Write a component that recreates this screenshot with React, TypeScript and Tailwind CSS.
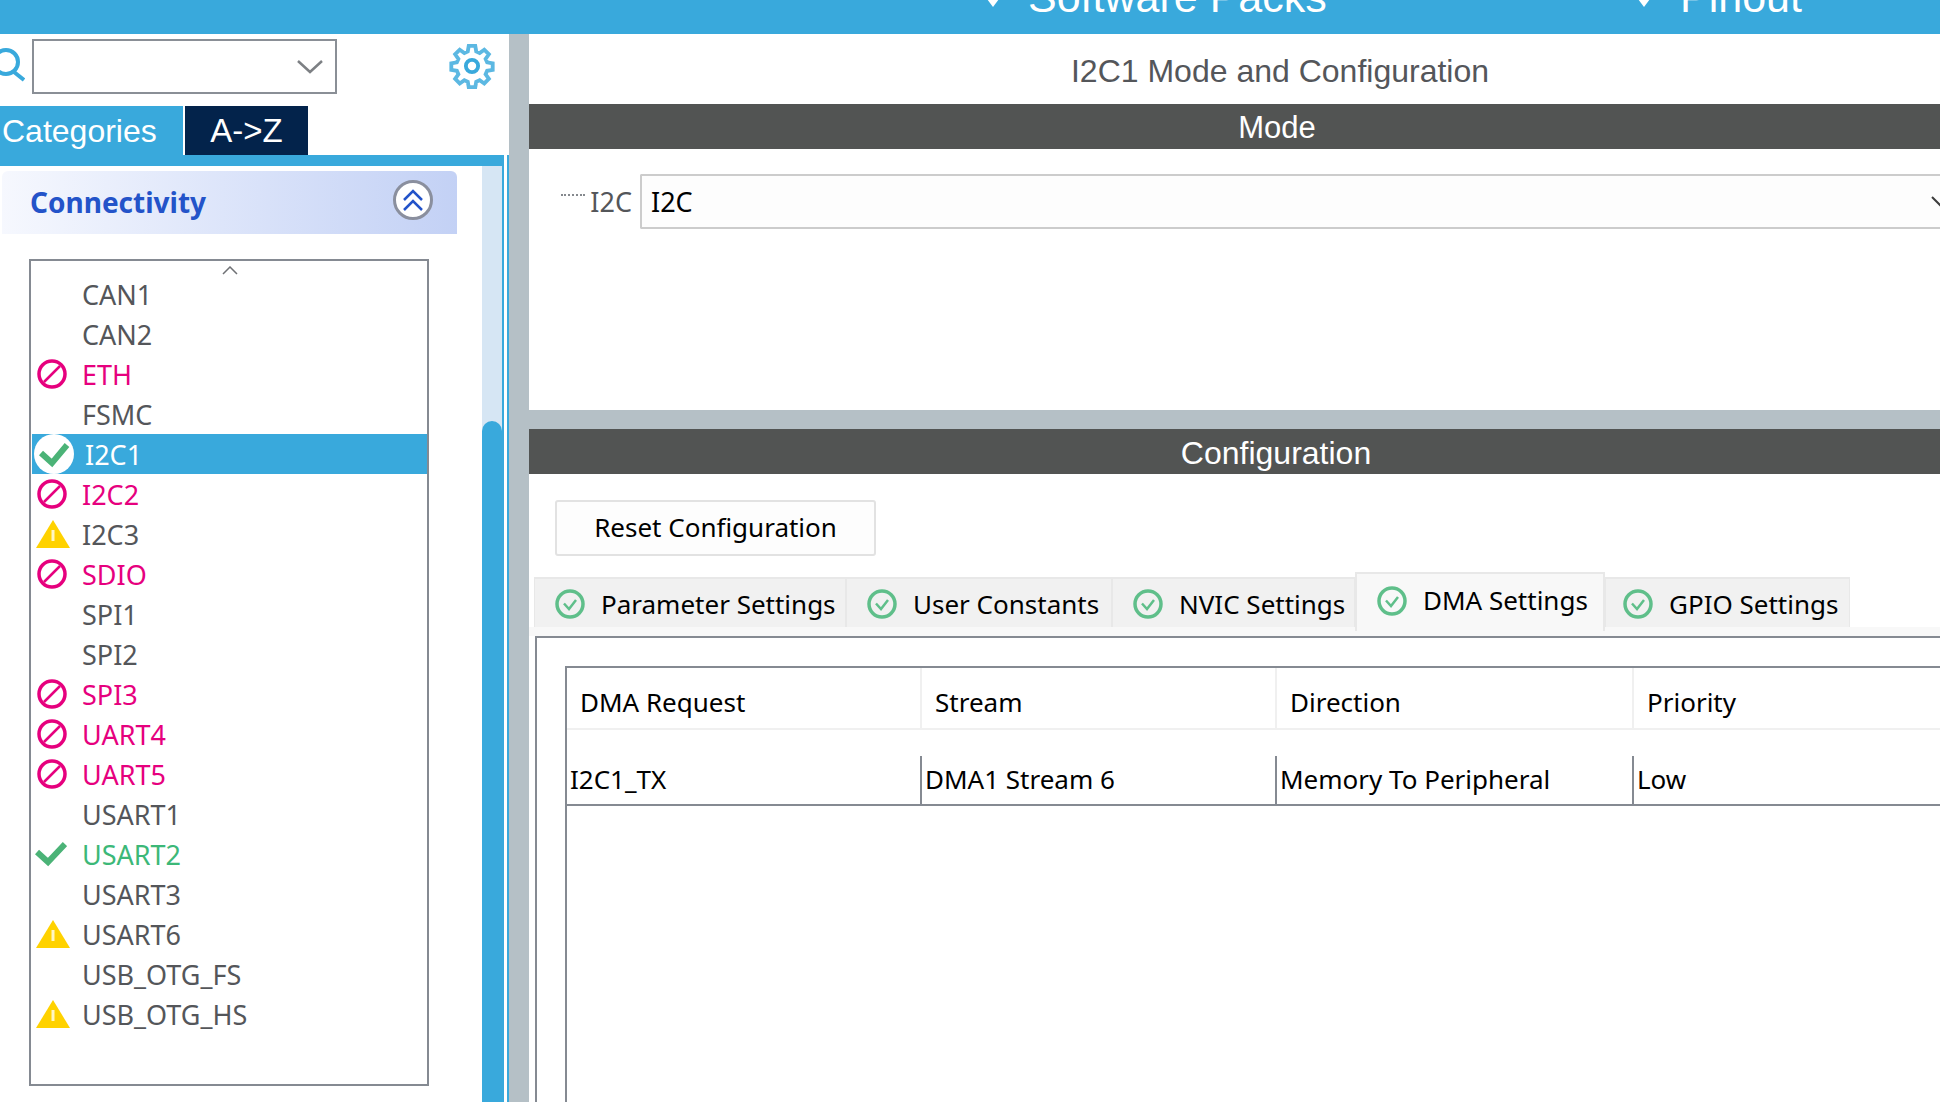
const uiFont = "font-['Noto_Sans','DejaVu_Sans',sans-serif]";
const headFont = "font-['Liberation_Sans',Arial,sans-serif]";

type Status = 'none' | 'blocked' | 'warn' | 'ok' | 'selected';

const peripherals: { name: string; status: Status }[] = [
  { name: 'CAN1', status: 'none' },
  { name: 'CAN2', status: 'none' },
  { name: 'ETH', status: 'blocked' },
  { name: 'FSMC', status: 'none' },
  { name: 'I2C1', status: 'selected' },
  { name: 'I2C2', status: 'blocked' },
  { name: 'I2C3', status: 'warn' },
  { name: 'SDIO', status: 'blocked' },
  { name: 'SPI1', status: 'none' },
  { name: 'SPI2', status: 'none' },
  { name: 'SPI3', status: 'blocked' },
  { name: 'UART4', status: 'blocked' },
  { name: 'UART5', status: 'blocked' },
  { name: 'USART1', status: 'none' },
  { name: 'USART2', status: 'ok' },
  { name: 'USART3', status: 'none' },
  { name: 'USART6', status: 'warn' },
  { name: 'USB_OTG_FS', status: 'none' },
  { name: 'USB_OTG_HS', status: 'warn' },
];

const tabs = [
  { label: 'Parameter Settings', width: 'w-[312px]', pad: 'pl-[20px]' },
  { label: 'User Constants', width: 'w-[266px]', pad: 'pl-[20px]' },
  { label: 'NVIC Settings', width: 'w-[243px]', pad: 'pl-[20px]' },
  { label: 'DMA Settings', width: 'w-[250px]', pad: 'pl-[20px]', active: true },
  { label: 'GPIO Settings', width: 'w-[245px]', pad: 'pl-[17px]' },
];

const Blocked = () => (
  <svg width="30" height="30" viewBox="0 0 30 30" fill="none" stroke="#e6007e">
    <circle cx="15" cy="15" r="13" strokeWidth="3.5" />
    <path d="M7 23 23 7" strokeWidth="2.5" />
  </svg>
);

const Warn = () => (
  <svg width="34" height="28" viewBox="0 0 34 28">
    <path d="M17 0 34 28H0Z" fill="#ffd200" />
    <path d="M17 10v11" stroke="#fff6c4" strokeWidth="3" />
  </svg>
);

const Tick = () => (
  <svg width="32" height="26" viewBox="0 0 32 26" fill="none" stroke="#4bb377" strokeWidth="6">
    <path d="M2 11 13 21 30 3" />
  </svg>
);

const SelectedTick = () => (
  <svg width="40" height="40" viewBox="0 0 40 40">
    <circle cx="20" cy="20" r="20" fill="#fff" />
    <path d="M7 19 18 29 33 11" fill="none" stroke="#4bb377" strokeWidth="6" />
  </svg>
);

const TabCheck = () => (
  <svg width="30" height="30" viewBox="0 0 30 30" fill="none" stroke="#5fbf8a" className="shrink-0">
    <circle cx="15" cy="15" r="13" strokeWidth="3.5" />
    <path d="M9 14.5 14 20 21 11" strokeWidth="2.5" />
  </svg>
);

const Gear = () => (
  <svg width="46" height="46" viewBox="0 0 24 24" fill="none">
    <circle cx="12" cy="12" r="3.2" stroke="#39a9dc" strokeWidth="2" />
    <path
      d="M10.3 1.5h3.4l.5 2.9 1.8.8 2.4-1.7 2.4 2.4-1.7 2.4.8 1.8 2.9.5v3.4l-2.9.5-.8 1.8 1.7 2.4-2.4 2.4-2.4-1.7-1.8.8-.5 2.9h-3.4l-.5-2.9-1.8-.8-2.4 1.7-2.4-2.4 1.7-2.4-.8-1.8-2.9-.5v-3.4l2.9-.5.8-1.8-1.7-2.4 2.4-2.4 2.4 1.7 1.8-.8z"
      stroke="#5cb8e2"
      strokeWidth="2"
    />
  </svg>
);

const Diamond = () => (
  <svg width="18" height="12" viewBox="0 0 18 12" fill="#fff">
    <path d="M0 0h18L9 12Z" />
  </svg>
);

function PeripheralRow({ name, status }: { name: string; status: Status }) {
  const selected = status === 'selected';
  const color =
    status === 'blocked' ? 'text-[#e6007e]' : status === 'ok' ? 'text-[#3cb878]' : selected ? 'text-white' : 'text-[#54565a]';
  const pad = selected ? 'pl-[2px]' : status === 'blocked' ? 'pl-[5px]' : status === 'warn' ? 'pl-[4px]' : 'pl-[3px]';
  return (
    <div className={`flex items-center h-10 ${selected ? 'bg-[#39a9dc]' : ''}`}>
      <div className={`w-[50px] shrink-0 flex items-center ${pad}`}>
        {status === 'blocked' && <Blocked />}
        {status === 'warn' && <Warn />}
        {status === 'ok' && <Tick />}
        {selected && <SelectedTick />}
      </div>
      <span className={`${selected ? 'ml-[3px]' : ''} text-[27px] leading-none ${color}`}>{name}</span>
    </div>
  );
}

function Sidebar() {
  return (
    <div className={`w-[509px] shrink-0 flex flex-col bg-white overflow-hidden ${uiFont}`}>
      {/* search row */}
      <div className="h-[72px] shrink-0 flex items-start pt-[5px]">
        <svg width="26" height="36" viewBox="0 0 26 36" fill="none" stroke="#39a9dc" strokeWidth="4" className="mt-[8px] -ml-[1px]">
          <circle cx="7" cy="15" r="12" />
          <path d="M15 25 25 33" />
        </svg>
        <div className="ml-[7px] w-[305px] h-[55px] border-2 border-[#8a8f96] flex items-center justify-end pr-[12px]">
          <svg width="26" height="16" viewBox="0 0 26 16" fill="none" stroke="#7d8084" strokeWidth="2.5">
            <path d="M1 2 13 13 25 2" />
          </svg>
        </div>
        <div className="ml-[112px] mt-[4px]">
          <Gear />
        </div>
      </div>

      <div className={`h-[49px] shrink-0 flex items-stretch text-white ${headFont}`}>
        <div className="w-[183px] bg-[#39a9dc] pl-[2px] flex items-center text-[32px]">Categories</div>
        <div className="ml-[2px] w-[123px] bg-[#03234b] flex items-center justify-center text-[33px]">A-&gt;Z</div>
      </div>

      <div className="flex-1 min-h-0 flex border-r-2 border-[#39a9dc]">
        <div className="flex-1 min-w-0 flex flex-col border-r-2 border-[#39a9dc] mr-[3px]">
          <div className="h-[11px] shrink-0 bg-[#39a9dc]" />
          <div className="flex-1 min-h-0 flex">
            <div className="w-[482px] shrink-0 pt-[5px]">
              <div className="ml-[2px] w-[455px] h-[63px] rounded-t-[6px] bg-gradient-to-r from-[#f6f8fe] to-[#c3d1f5] flex items-center justify-between pl-[28px] pr-[24px]">
                <span className="-mt-[2px] text-[28px] font-bold text-[#2353c9]">Connectivity</span>
                <div className="-mt-[5px] w-10 h-10 rounded-full border-[3px] border-[#8a8f9e] bg-white flex items-center justify-center">
                  <svg width="22" height="24" viewBox="0 0 22 24" fill="none" stroke="#2353c9" strokeWidth="2.5">
                    <path d="M2 12 11 3l9 9M2 22l9-9 9 9" />
                  </svg>
                </div>
              </div>
              <div className="relative mt-[25px] ml-[29px] w-[400px] h-[827px] border-2 border-[#858a92] pt-[13px] pl-[1px]">
                <svg width="16" height="9" viewBox="0 0 16 9" fill="none" stroke="#6f7175" strokeWidth="1.5" className="absolute top-[5px] left-[191px]">
                  <path d="M1 8 8 1l7 7" />
                </svg>
                {peripherals.map((p) => (
                  <PeripheralRow key={p.name} name={p.name} status={p.status} />
                ))}
              </div>
            </div>
            <div className="w-5 shrink-0 bg-[#d6e6f4] flex flex-col justify-end">
              <div className="h-[681px] rounded-t-[10px] bg-[#39a9dc]" />
            </div>
          </div>
        </div>
      </div>
    </div>
  );
}

function ConfigTable() {
  const heads = [
    { label: 'DMA Request', width: 'w-[353px]' },
    { label: 'Stream', width: 'w-[355px]' },
    { label: 'Direction', width: 'w-[357px]' },
    { label: 'Priority', width: 'w-[320px]' },
  ];
  const cells = [
    { label: 'I2C1_TX', width: 'w-[353px]' },
    { label: 'DMA1 Stream 6', width: 'w-[355px]' },
    { label: 'Memory To Peripheral', width: 'w-[357px]' },
    { label: 'Low', width: 'w-[320px]' },
  ];
  return (
    <div className="ml-[28px] mt-[28px] flex-1 border-l-2 border-t-2 border-[#858a92]">
      <div className="flex h-[62px] border-b-2 border-[#f0f0f0]">
        {heads.map((h, i) => (
          <div key={h.label} className={`${h.width} shrink-0 flex items-center pl-[13px] pt-[8px] ${i > 0 ? 'border-l-2 border-[#f0f0f0]' : ''}`}>
            {h.label}
          </div>
        ))}
      </div>
      <div className="flex mt-[26px] h-[50px] border-b-2 border-[#858a92]">
        {cells.map((c, i) => (
          <div key={c.label} className={`${c.width} shrink-0 flex items-center pl-[3px] pb-[2px] ${i > 0 ? 'border-l-2 border-[#858a92]' : ''}`}>
            {c.label}
          </div>
        ))}
      </div>
    </div>
  );
}

function MainPanel() {
  return (
    <div className={`w-[1496px] shrink-0 flex flex-col bg-white ${uiFont}`}>
      <div className={`h-[70px] shrink-0 flex items-center justify-center pl-[6px] pt-[4px] text-[32px] text-[#54565a] ${headFont}`}>
        I2C1 Mode and Configuration
      </div>
      <div className={`h-[45px] shrink-0 bg-[#525453] flex items-center justify-center pt-[3px] text-white text-[31px] ${headFont}`}>Mode</div>

      <div className="h-[261px] shrink-0 pt-[25px] flex items-start">
        <div className="w-[111px] shrink-0 h-[55px] flex items-center justify-end pr-[8px] pt-[2px]">
          <span className="w-[24px] mr-[5px] -mt-[16px] border-t-2 border-dotted border-[#85898e]" />
          <span className="text-[27px] text-[#54565a]">I2C</span>
        </div>
        <div className="flex-1 h-[55px] border-y-2 border-l-2 border-[#cccccc] bg-[#fdfdfd] rounded-l-[2px] flex items-center justify-between pl-[9px] pr-[70px] pt-[2px] text-[27px] text-black">
          I2C
          <svg width="24" height="14" viewBox="0 0 24 14" fill="none" stroke="#3d3d3d" strokeWidth="2">
            <path d="M1 1l11 11L23 1" />
          </svg>
        </div>
      </div>

      <div className="h-[19px] shrink-0 bg-[#b5c0c6]" />
      <div className={`h-[45px] shrink-0 bg-[#525453] flex items-center justify-center pt-[3px] pr-[2px] text-white text-[32px] ${headFont}`}>Configuration</div>

      <div className="pt-[26px] pl-[26px] shrink-0">
        <div className="w-[321px] h-[56px] pb-[2px] border-2 border-[#e2e2e2] rounded-[3px] bg-[#fdfdfd] flex items-center justify-center text-[26px] text-black">
          Reset Configuration
        </div>
      </div>

      <div className="relative mt-[21px] pl-[5px] h-[50px] shrink-0 flex items-stretch text-[26px] text-black">
        {tabs.map((t) =>
          t.active ? (
            <div key={t.label} className={`${t.width} shrink-0 h-[59px] -mt-[5px] bg-[#f8f8f8] border-x-2 border-t-2 border-[#e8e8e8] flex items-start gap-[16px] ${t.pad} pt-[12px]`}>
              <TabCheck />
              <span className="leading-[28px]">{t.label}</span>
            </div>
          ) : (
            <div key={t.label} className={`${t.width} shrink-0 bg-[#f1f1f1] border-x border-t-2 border-[#e8e8e8] flex items-center gap-[16px] ${t.pad} pt-[2px]`}>
              <TabCheck />
              <span>{t.label}</span>
            </div>
          ),
        )}
      </div>

      <div className="h-[9px] shrink-0 bg-[#f8f8f8]" />
      <div className="flex-1 min-h-0 ml-[6px] flex flex-col border-l-2 border-t-2 border-[#858a92] text-[26px] text-black">
        <ConfigTable />
      </div>
    </div>
  );
}

export default function App() {
  return (
    <div className="w-[1940px] h-[1102px] overflow-hidden flex flex-col bg-white">
      <div className={`relative h-[34px] shrink-0 bg-[#39a9dc] overflow-hidden text-white text-[43px] ${headFont}`}>
        <div className="absolute left-[984px] -top-[5px]">
          <Diamond />
        </div>
        <span className="absolute left-[1028px] -top-[24px] leading-none whitespace-nowrap">Software Packs</span>
        <div className="absolute left-[1635px] -top-[5px]">
          <Diamond />
        </div>
        <span className="absolute left-[1680px] -top-[24px] leading-none">Pinout</span>
      </div>
      <div className="flex-1 min-h-0 flex">
        <Sidebar />
        <div className="relative w-[20px] shrink-0 bg-[#b5c0c6]" />
        <MainPanel />
      </div>
    </div>
  );
}
